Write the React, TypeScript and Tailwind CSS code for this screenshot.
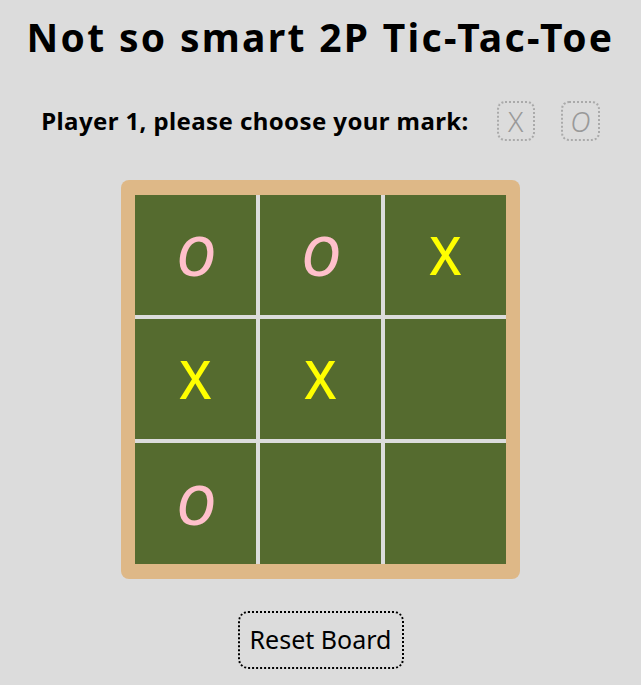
const board = ["O", "O", "X", "X", "X", "", "O", "", ""]

function Mark({ value }: { value: string }) {
  if (value === "X") return <span className="text-[52px] leading-none font-medium text-[#ffff00]">X</span>
  if (value === "O") return <span className="text-[54px] leading-none font-medium italic text-[#ffc0cb]">O</span>
  return null
}

export default function App() {
  return (
    <div
      className="flex min-h-[685px] flex-col items-center bg-[#dcdcdc] text-black"
      style={{ fontFamily: '"Comic Sans MS", "Noto Sans", sans-serif' }}
    >
      <h1 className="mt-[12px] text-[39px] leading-[50px] font-bold tracking-[2.3px]">Not so smart 2P Tic-Tac-Toe</h1>

      <div className="mt-[39px] flex h-[40px] items-center">
        <span className="text-[24px] font-bold tracking-[0.4px]">Player 1, please choose your mark:</span>
        <button className="ml-[28px] flex h-[40px] w-[38px] items-center justify-center rounded-[8px] border-2 border-dotted border-[#aaa] text-[28px] font-light text-[#999]">
          X
        </button>
        <button className="ml-[26px] flex h-[40px] w-[39px] items-center justify-center rounded-[8px] border-2 border-dotted border-[#aaa] text-[28px] font-light italic text-[#999]">
          O
        </button>
      </div>

      <div className="mt-[39px] rounded-[8px] bg-[#deb887] px-[14px] pt-[15px] pb-[15px]">
        <div className="grid grid-cols-[121px_121px_121px] grid-rows-[120px_120px_121px] gap-[4px] bg-[#dcdcdc]">
          {board.map((v, i) => (
            <div key={i} className="flex items-center justify-center bg-[#556b2f]">
              <Mark value={v} />
            </div>
          ))}
        </div>
      </div>

      <button className="mt-[32px] h-[58px] w-[166px] rounded-[10px] border-2 border-dotted border-black text-[25px]">
        Reset Board
      </button>
    </div>
  )
}
